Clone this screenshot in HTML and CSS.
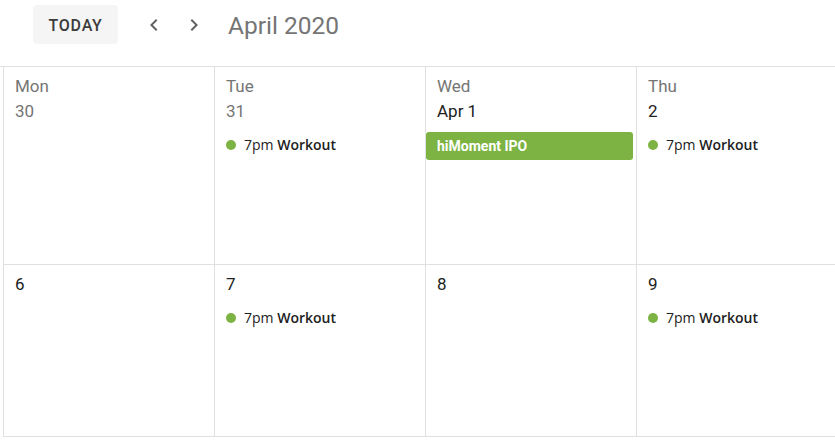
FILE: index.html
```html
<!DOCTYPE html>
<html lang="en">
<head>
  <meta charset="UTF-8">
  <meta name="viewport" content="width=device-width, initial-scale=1.0">
  <title>Calendar</title>
  <link rel="stylesheet" href="styles.css">
</head>
<body>
  <div class="toolbar">
    <button class="today-btn">TODAY</button>
    <button class="icon-btn" aria-label="Previous">
      <svg width="24" height="24" viewBox="0 0 24 24"><path d="M15.41 7.41L14 6l-6 6 6 6 1.41-1.41L10.83 12z"/></svg>
    </button>
    <button class="icon-btn" aria-label="Next">
      <svg width="24" height="24" viewBox="0 0 24 24"><path d="M10 6L8.59 7.41 13.17 12l-4.58 4.59L10 18l6-6z"/></svg>
    </button>
    <div class="title">April 2020</div>
  </div>

  <!-- month grid -->
  <div class="calendar">
    <div class="week">
      <div class="day past">
        <div class="weekday">Mon</div>
        <div class="date">30</div>
      </div>
      <div class="day past">
        <div class="weekday">Tue</div>
        <div class="date">31</div>
        <div class="event"><span class="dot"></span>7pm <strong>Workout</strong></div>
      </div>
      <div class="day">
        <div class="weekday">Wed</div>
        <div class="date">Apr 1</div>
        <div class="event-bar">hiMoment IPO</div>
      </div>
      <div class="day">
        <div class="weekday">Thu</div>
        <div class="date">2</div>
        <div class="event"><span class="dot"></span>7pm <strong>Workout</strong></div>
      </div>
    </div>
    <div class="week">
      <div class="day">
        <div class="date">6</div>
      </div>
      <div class="day">
        <div class="date">7</div>
        <div class="event"><span class="dot"></span>7pm <strong>Workout</strong></div>
      </div>
      <div class="day">
        <div class="date">8</div>
      </div>
      <div class="day">
        <div class="date">9</div>
        <div class="event"><span class="dot"></span>7pm <strong>Workout</strong></div>
      </div>
    </div>
    <div class="week"></div>
  </div>
</body>
</html>
```

FILE: styles.css
```css
* {
  margin: 0;
  padding: 0;
  box-sizing: border-box;
}
body {
  background-color: #ffffff;
  font-family: Roboto, "Liberation Sans", Arial, sans-serif;
  color: #212121;
  width: 835px;
  height: 441px;
  overflow: hidden;
}
.toolbar {
  display: flex;
  align-items: center;
  height: 39px;
  margin-top: 5px;
  padding-left: 33px;
}
.today-btn {
  height: 39px;
  width: 85px;
  border: none;
  border-radius: 4px;
  background-color: #f5f5f5;
  color: #3c3c3c;
  font-family: "Roboto Medium", Roboto, sans-serif;
  font-size: 16px;
  font-weight: 500;
  letter-spacing: 0.8px;
  margin-right: 16px;
  padding-top: 2px;
  cursor: pointer;
}
.icon-btn {
  width: 40px;
  height: 39px;
  border: none;
  background: none;
  display: flex;
  align-items: center;
  justify-content: center;
  cursor: pointer;
}
.icon-btn svg {
  fill: #616161;
}
.title {
  margin-left: 14px;
  font-size: 24.5px;
  color: #757575;
  padding-top: 1px;
}
.calendar {
  margin-top: 22px;
  border-top: 1px solid #e0e0e0;
  padding-left: 3px;
  width: 1100px;
}
.week {
  display: grid;
  grid-template-columns: repeat(5, 211px);
  border-bottom: 1px solid #e0e0e0;
  min-height: 172px;
}
.week:first-child {
  min-height: 198px;
}
.day {
  border-left: 1px solid #e0e0e0;
  padding-top: 7px;
}
.weekday, .date {
  font-size: 17px;
  line-height: 25px;
  padding-left: 11px;
  color: #757575;
}
.date {
  color: #212121;
}
.past .date {
  color: #757575;
}
.event {
  margin-top: 7px;
  height: 28px;
  line-height: 28px;
  padding-left: 11px;
  font-family: "Open Sans", sans-serif;
  font-size: 14px;
  color: #212121;
  display: flex;
  align-items: center;
  white-space: pre;
}
.event strong {
  font-weight: 600;
}
.dot {
  width: 10px;
  height: 10px;
  border-radius: 50%;
  background-color: #7cb342;
  margin-right: 8px;
}
.event-bar {
  margin-top: 8px;
  margin-right: 3px;
  height: 28px;
  line-height: 28px;
  padding-left: 11px;
  border-radius: 3px;
  background-color: #7cb342;
  color: #ffffff;
  font-size: 14px;
  font-weight: bold;
}
```
